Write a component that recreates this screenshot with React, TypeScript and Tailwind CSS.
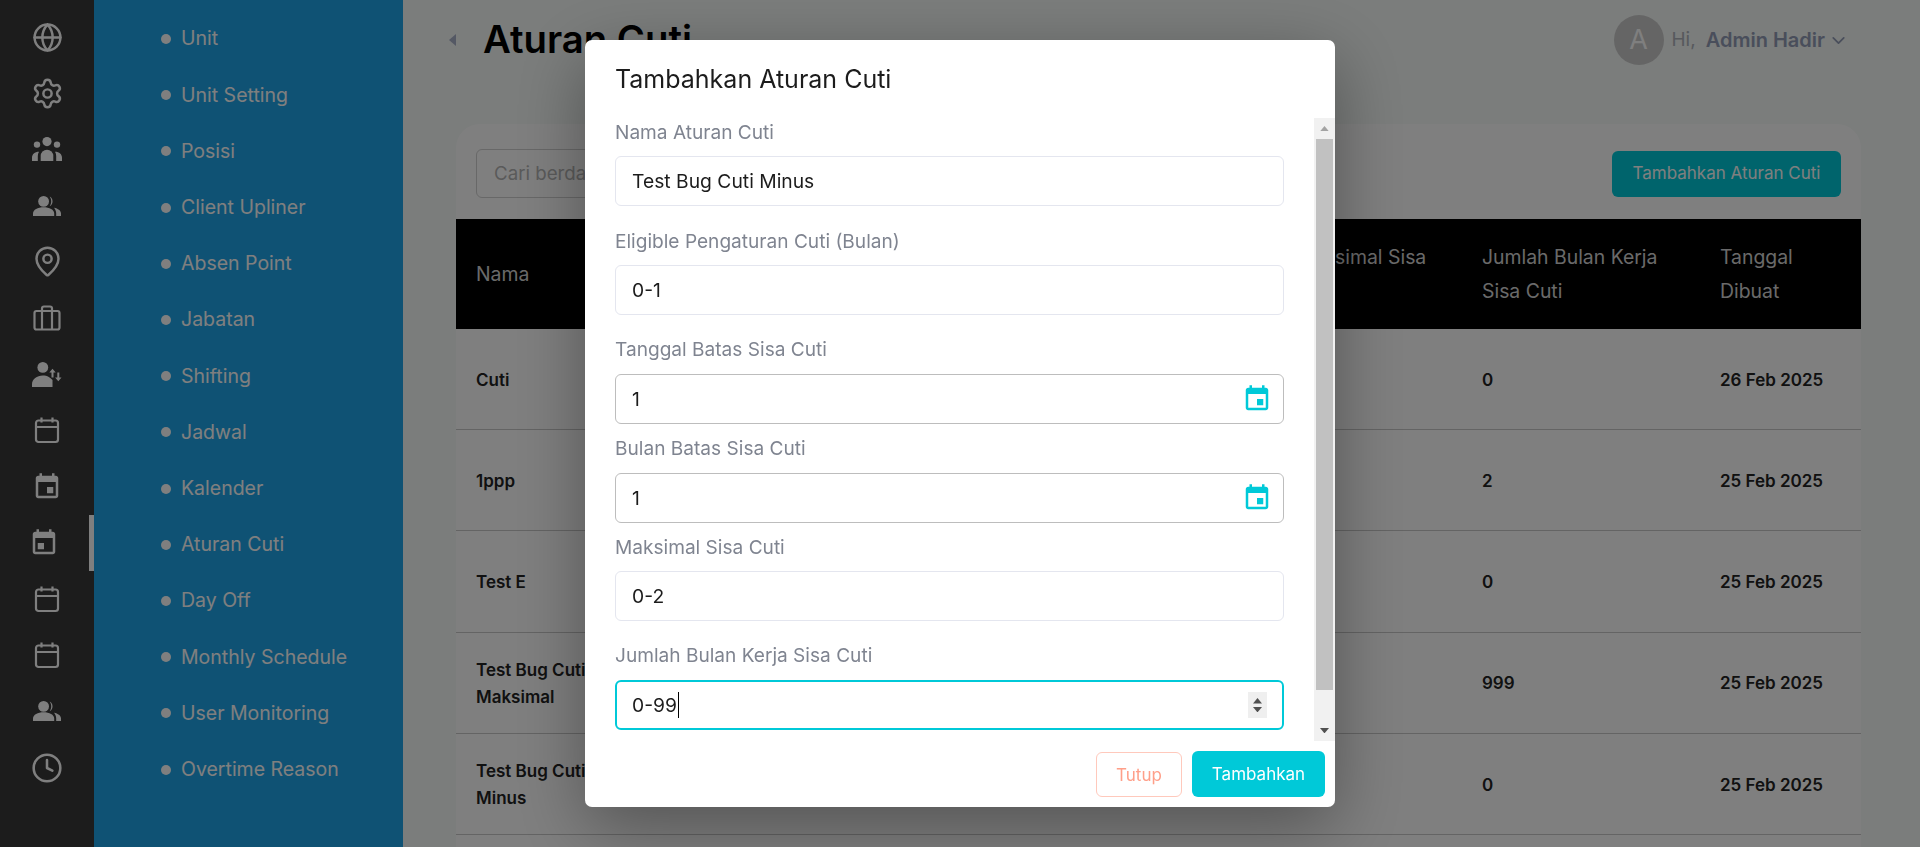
import type { ReactNode } from 'react';
import { ChevronDown, Clock, Globe, MapPin, Settings } from 'lucide-react';

const menuItems = [
  'Unit',
  'Unit Setting',
  'Posisi',
  'Client Upliner',
  'Absen Point',
  'Jabatan',
  'Shifting',
  'Jadwal',
  'Kalender',
  'Aturan Cuti',
  'Day Off',
  'Monthly Schedule',
  'User Monitoring',
  'Overtime Reason',
];

const rows = [
  { name: 'Cuti', sisa: '0', date: '26 Feb 2025' },
  { name: '1ppp', sisa: '2', date: '25 Feb 2025' },
  { name: 'Test E', sisa: '0', date: '25 Feb 2025' },
  { name: 'Test Bug Cuti Maksimal', sisa: '999', date: '25 Feb 2025' },
  { name: 'Test Bug Cuti Minus', sisa: '0', date: '25 Feb 2025' },
];

function CalendarOutline() {
  return (
    <svg width="26" height="28" viewBox="0 0 26 28" fill="none" stroke="currentColor" strokeWidth="2.2" strokeLinejoin="round">
      <rect x="2" y="4.5" width="22" height="21.5" rx="2.5" />
      <path d="M2 11h22M7.5 1.5v5M18.5 1.5v5" />
    </svg>
  );
}

function EventIcon({ size = 30, flip = false, className = '' }: { size?: number; flip?: boolean; className?: string }) {
  return (
    <svg width={size} height={size} viewBox="0 0 24 24" fill="currentColor" className={(flip ? '-scale-x-100 ' : '') + className}>
      <path d="M17 12h-5v5h5v-5zM16 1v2H8V1H6v2H5c-1.11 0-1.99.9-1.99 2L3 19c0 1.1.89 2 2 2h14c1.1 0 2-.9 2-2V5c0-1.1-.9-2-2-2h-1V1h-2zm3 18H5V8h14v11z" />
    </svg>
  );
}

function SuitcaseIcon() {
  return (
    <svg width="28" height="26" viewBox="0 0 28 26" fill="none" stroke="currentColor" strokeWidth="2.2" strokeLinejoin="round">
      <rect x="1.5" y="6" width="25" height="18.5" rx="2" />
      <path d="M9 24V3.5A2 2 0 0 1 11 1.5h6a2 2 0 0 1 2 2V24" />
    </svg>
  );
}

function PersonSwapIcon() {
  return (
    <svg width="30" height="25" viewBox="0 0 30 25" fill="currentColor">
      <circle cx="10.8" cy="5.4" r="5.4" />
      <path d="M0 25v-2.5c0-5.5 5-9 10.8-9 2.2 0 4.2.5 6 1.4 1.6.8 2.8 1.9 3.7 3.1v7z" />
      <path d="M20.5 6.8l-3.2 3.8h2.2v5h2v-5h2.2zM26.3 19.2l3.2-3.8h-2.2v-5h-2v5h-2.2z" />
    </svg>
  );
}

function GroupIcon() {
  return (
    <svg width="30" height="24" viewBox="0 0 30 24" fill="currentColor">
      <circle cx="15" cy="4.6" r="4.6" />
      <circle cx="5" cy="7.6" r="3.2" />
      <circle cx="25" cy="7.6" r="3.2" />
      <path d="M8.7 24v-5a6.3 6.3 0 0 1 12.6 0v5z" />
      <path d="M0 24v-3.2c0-3.4 2.6-6 7-6-.8 1.2-1.2 2.7-1.2 4.2v5z" />
      <path d="M30 24v-3.2c0-3.4-2.6-6-7-6 .8 1.2 1.2 2.7 1.2 4.2v5z" />
    </svg>
  );
}

function UsersIcon() {
  return (
    <svg width="28" height="20" viewBox="0 0 28 20" fill="currentColor">
      <circle cx="10.6" cy="5.4" r="5.4" />
      <path d="M0 20v-2.4c0-4 4.8-6.4 10.6-6.4s10.6 2.4 10.6 6.4V20z" />
      <path d="M16.600 .6a5.4 5.4 0 0 1 0 9.6c1-1.3 1.6-3 1.6-4.800s-.6-3.500-1.600-4.800z" />
      <path d="M21 11.800c4 .8 7 2.800 7 5.800V20h-4.800v-2.400c0-2.300-.8-4.200-2.200-5.800z" />
    </svg>
  );
}

const railIcons: ReactNode[] = [
  <Globe size={31} strokeWidth={1.9} />,
  <Settings size={33} strokeWidth={1.8} />,
  <GroupIcon />,
  <UsersIcon />,
  <MapPin size={33} strokeWidth={1.8} />,
  <SuitcaseIcon />,
  <PersonSwapIcon />,
  <CalendarOutline />,
  <EventIcon />,
  <EventIcon flip />,
  <CalendarOutline />,
  <CalendarOutline />,
  <UsersIcon />,
  <Clock size={32} strokeWidth={1.9} />,
];

function Rail() {
  return (
    <aside className="flex w-[94px] shrink-0 flex-col bg-[#383838] pt-[9px] text-white">
      {railIcons.map((icon, i) => (
        <div
          key={i}
          className={[
            'relative flex h-[56.2px] shrink-0 items-center justify-center',
            i === 9 ? 'pr-[6px]' : '',
          ].join(' ')}
        >
          {icon}
          {i === 9 && <span className="absolute right-0 top-0 h-full w-[5px] bg-white" />}
        </div>
      ))}
    </aside>
  );
}

function SubMenu() {
  return (
    <nav className="flex w-[309px] shrink-0 flex-col bg-[#1fa5e8] pl-[67px] pt-[11px] text-white">
      {menuItems.map((item) => (
        <div key={item} className="flex h-[56.2px] shrink-0 items-center gap-[10px] text-[19.5px]">
          <span className="h-[10px] w-[10px] rounded-full bg-white" />
          {item}
        </div>
      ))}
    </nav>
  );
}

function DataTable() {
  return (
    <section className="flex-1 rounded-t-[24px] bg-white">
      <div className="flex items-center justify-between px-5 pb-[21px] pt-[25px]">
        <input
          readOnly
          placeholder="Cari berdasarkan nama"
          className="h-[49px] w-[420px] rounded-md border border-[#d0d0d0] px-[17px] text-[18.7px] placeholder:text-[#b5b5b5]"
        />
        <button type="button" className="h-[46px] w-[229px] rounded-md bg-[#00c9d8] text-[17px] text-white">
          Tambahkan Aturan Cuti
        </button>
      </div>
      <div className="grid h-[110px] grid-cols-[840px_186px_238px_141px] items-center bg-black text-[19.4px] leading-[34px] text-[#d4d4d4]">
        <div className="pl-5">Nama</div>
        <div className="w-[150px]">Maksimal Sisa Cuti</div>
        <div className="w-[200px]">Jumlah Bulan Kerja Sisa Cuti</div>
        <div className="w-[100px]">Tanggal Dibuat</div>
      </div>
      {rows.map((row) => (
        <div
          key={row.name}
          className="grid h-[101.2px] grid-cols-[840px_186px_238px_141px] items-center border-b border-[#c8c8c8] pt-[2px] text-[17px] font-semibold leading-[26.5px] text-[#222]"
        >
          <div className="w-[165px] pl-5">{row.name}</div>
          <div />
          <div>{row.sisa}</div>
          <div>{row.date}</div>
        </div>
      ))}
    </section>
  );
}

function Field({ label, value, date, gapClass }: { label: string; value: string; date?: boolean; gapClass: string }) {
  return (
    <div className={gapClass}>
      <label className={['block h-6 text-[19.1px] leading-6 text-[#7f8490]', date ? 'mb-[13px]' : 'mb-3'].join(' ')}>{label}</label>
      <div className="relative">
        <input
          readOnly
          value={value}
          className={[
            'h-[50px] w-full rounded-md border bg-white px-4 text-[19.3px] text-[#1c1c1c]',
            date ? 'border-[#bdbdbd]' : 'border-[#e4e6ef]',
          ].join(' ')}
        />
        {date && <EventIcon className="absolute right-[12px] top-[10px] text-[#00c9d8]" />}
      </div>
    </div>
  );
}

function Triangle({ dir, className }: { dir: 'up' | 'down'; className: string }) {
  return (
    <svg viewBox="0 0 10 6" fill="currentColor" className={className}>
      <path d={dir === 'up' ? 'M5 0l5 6H0z' : 'M0 0h10L5 6z'} />
    </svg>
  );
}

function FakeScrollbar() {
  return (
    <div className="flex w-[21px] shrink-0 flex-col items-center bg-[#f1f1f1]">
      <div className="flex h-[21px] w-full items-center justify-center">
        <Triangle dir="up" className="w-[9px] text-[#a3a3a3]" />
      </div>
      <div className="h-[551px] w-[17px] bg-[#c1c1c1]" />
      <div className="flex-1" />
      <div className="flex h-[21px] w-full items-center justify-center">
        <Triangle dir="down" className="w-[9px] text-[#505050]" />
      </div>
    </div>
  );
}

function AturanCutiModal() {
  return (
    <div className="fixed inset-0 z-10 flex justify-center bg-black/50 pt-10">
      <div className="flex h-[767px] w-[750px] flex-col rounded-[7px] bg-white shadow-[0_20px_70px_rgba(0,0,0,0.35)]">
        <h2 className="flex h-[78px] shrink-0 items-center pl-[30px] pt-[2px] text-[25px] font-normal text-[#1c1c1c]">
          Tambahkan Aturan Cuti
        </h2>
        <div className="flex h-[623px] shrink-0">
          <div className="flex-1 overflow-hidden pl-[30px] pr-[30px] pt-[2px]">
            <Field label="Nama Aturan Cuti" value="Test Bug Cuti Minus" gapClass="mb-[23px]" />
            <Field label="Eligible Pengaturan Cuti (Bulan)" value="0-1" gapClass="mb-[22px]" />
            <Field label="Tanggal Batas Sisa Cuti" value="1" date gapClass="mb-[12px]" />
            <Field label="Bulan Batas Sisa Cuti" value="1" date gapClass="mb-[12px]" />
            <Field label="Maksimal Sisa Cuti" value="0-2" gapClass="mb-[22px]" />
            <div>
              <label className="mb-[13px] block h-6 text-[19.1px] leading-6 text-[#7f8490]">Jumlah Bulan Kerja Sisa Cuti</label>
              <div className="flex h-[50px] items-center justify-between rounded-md border-2 border-[#00c9d8] pl-[15px] pr-[15px] text-[19.3px] text-[#1c1c1c]">
                <span className="flex items-center">
                  0-99
                  <span className="ml-px h-[26px] w-px bg-black" />
                </span>
                <span className="flex h-[26px] w-[19px] flex-col items-center justify-center gap-[3px] bg-[#efefef]">
                  <Triangle dir="up" className="w-[9px] text-[#505050]" />
                  <Triangle dir="down" className="w-[9px] text-[#505050]" />
                </span>
              </div>
            </div>
          </div>
          <FakeScrollbar />
        </div>
        <div className="flex flex-1 items-start justify-end gap-[10px] pr-[10px] pt-[10px]">
          <button type="button" className="mt-px h-[45px] w-[86px] rounded-md border border-[#ffc9bc] pt-[2px] text-[17px] text-[#ff9f89]">
            Tutup
          </button>
          <button type="button" className="h-[46px] w-[133px] rounded-md bg-[#00c9d8] pt-[2px] text-[17px] text-white">
            Tambahkan
          </button>
        </div>
      </div>
    </div>
  );
}

export default function App() {
  return (
    <div className="flex h-screen overflow-hidden bg-[#f6faf8] font-['Inter',sans-serif]">
      <Rail />
      <SubMenu />
      <main className="flex min-w-0 flex-1 flex-col pl-[53px] pr-[59px]">
        <header className="flex h-[124px] shrink-0 items-start justify-between pt-[15px]">
          <div className="flex h-[50px] items-center gap-[27px]">
            <svg viewBox="0 0 7 12" fill="currentColor" className="-ml-[7px] h-3 w-[7px] text-[#a8b0c8]">
              <path d="M7 0v12L0 6z" />
            </svg>
            <h1 className="text-[38.3px] font-semibold text-black">Aturan Cuti</h1>
          </div>
          <div className="flex items-center pr-[12px]">
            <span className="flex h-[50px] w-[50px] items-center justify-center rounded-full bg-[#cacaca] text-[27px] text-white">A</span>
            <span className="ml-[8px] text-[19px] text-[#aeb2bb]">Hi,</span>
            <span className="ml-[10px] text-[20px] font-semibold text-[#939cb6]">Admin Hadir</span>
            <ChevronDown size={21} className="ml-[3px] text-[#939cb6]" />
          </div>
        </header>
        <DataTable />
      </main>
      <AturanCutiModal />
    </div>
  );
}
